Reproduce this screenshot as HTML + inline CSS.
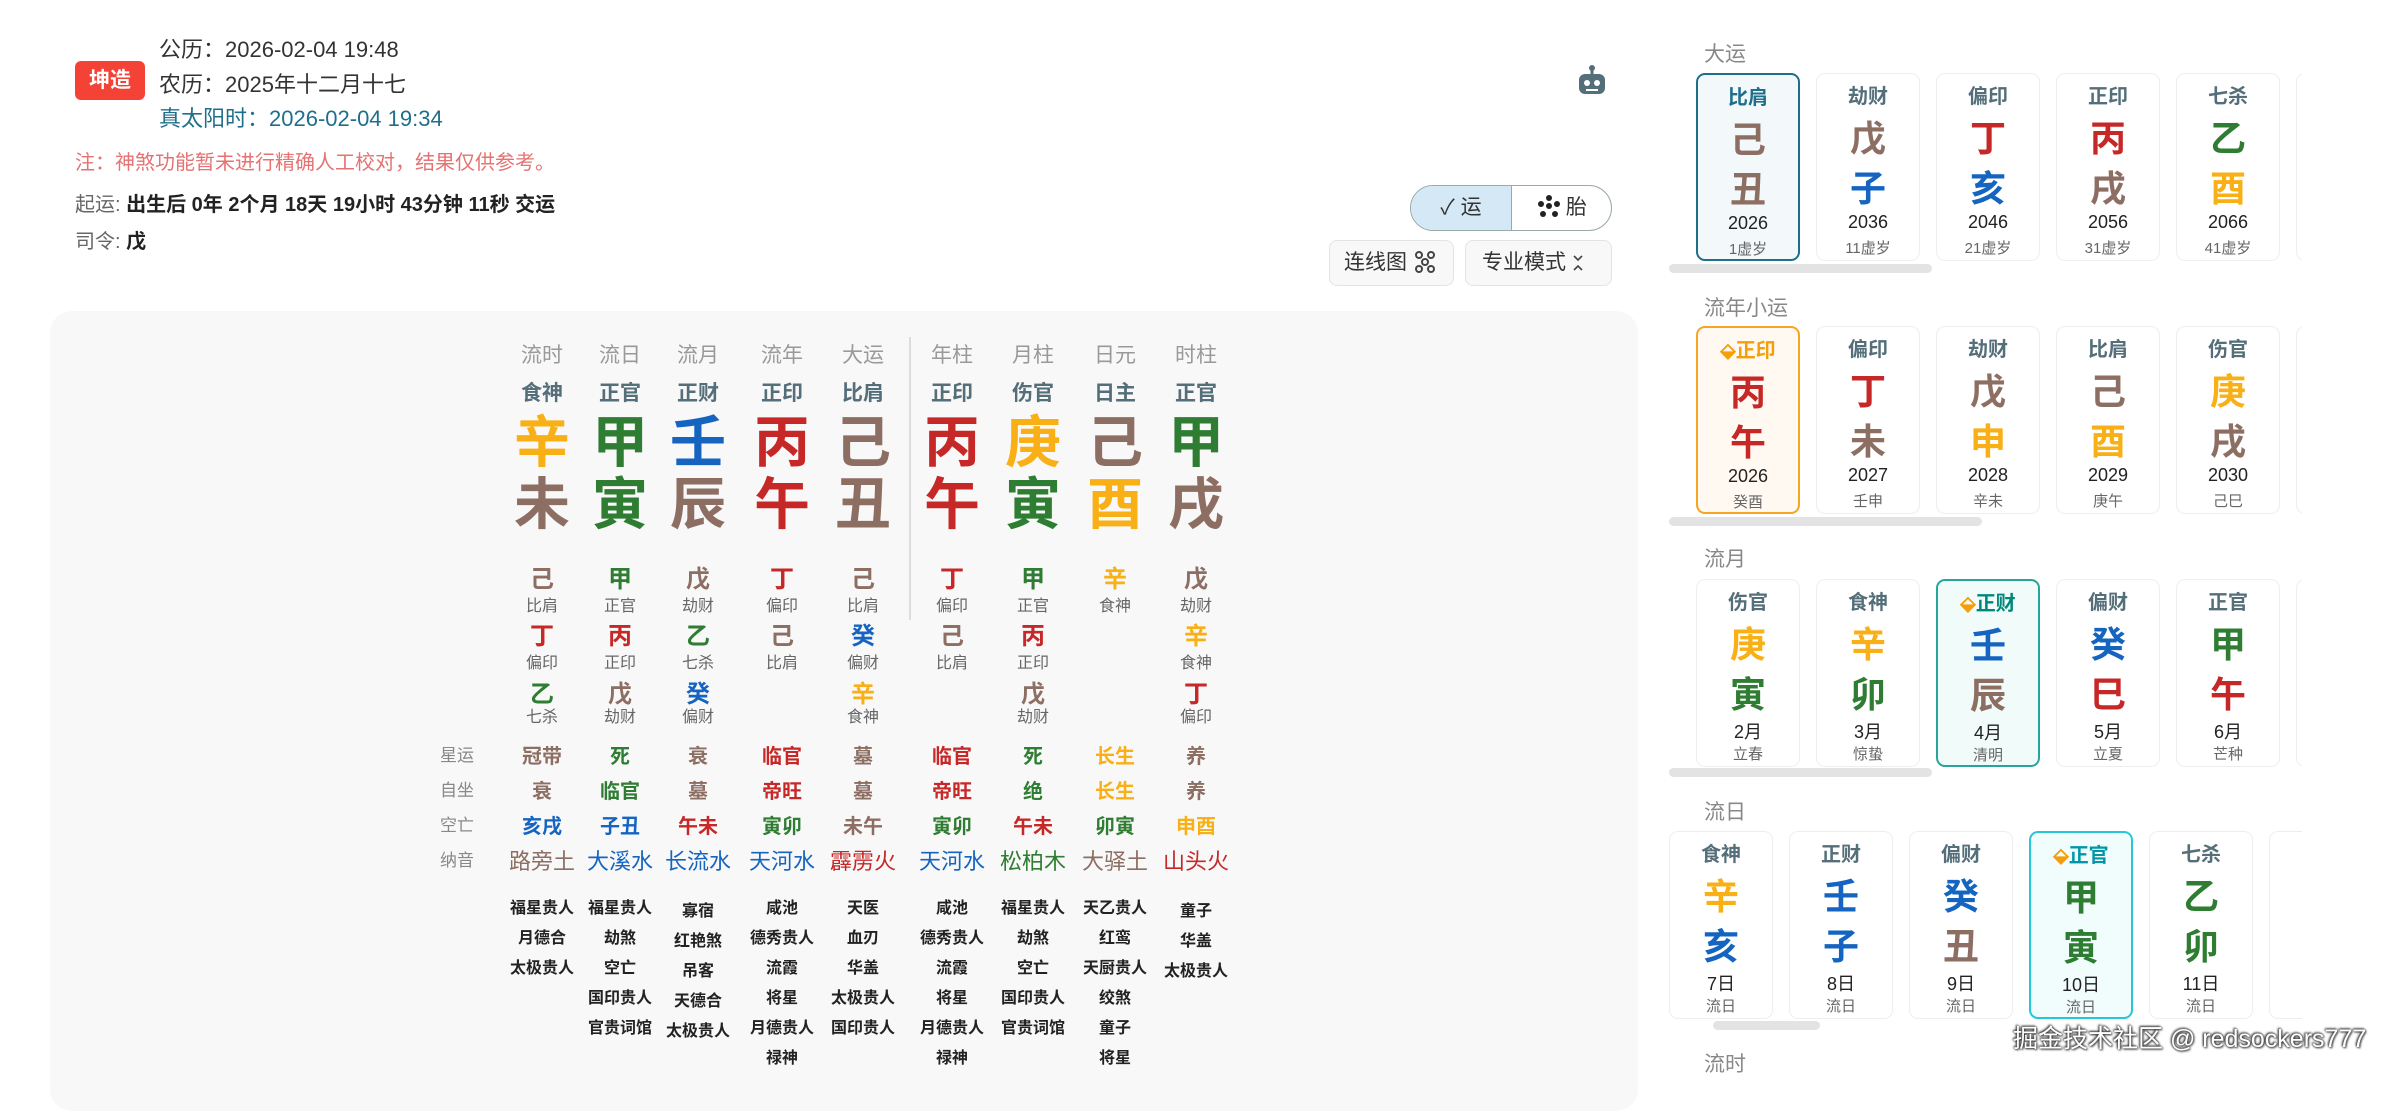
<!DOCTYPE html>
<html><head><meta charset="utf-8">
<style>
*{margin:0;padding:0;box-sizing:border-box}
body{width:2401px;height:1077px;overflow:hidden;background:#fff;font-family:"Liberation Sans","Noto Sans CJK SC",sans-serif;position:relative;color:#333}
.a{position:absolute;white-space:nowrap}
.g{color:#2e7d32}.r{color:#c62828}.b{color:#8d6e63}.y{color:#f9b016}.w{color:#1565c0}
.col{position:absolute;width:90px;text-align:center}
.col div{position:absolute;left:0;width:90px;text-align:center;white-space:nowrap}
.hd{top:0;font-size:21px;color:#999}
.ss{top:38px;font-size:21px;color:#546e7a;font-weight:bold}
.st{top:68px;font-size:56px;font-weight:bold;line-height:72px}
.br{top:130px;font-size:56px;font-weight:bold;line-height:72px}
.hc{font-size:24px;font-weight:bold}
.hl{font-size:16px;color:#666}
.x{font-size:20px;font-weight:bold}
.ny{font-size:22px}
.sh{font-size:16px;font-weight:bold;color:#222}
.lab{font-size:17px;color:#888}
.card{position:absolute;width:104px;height:188px;border:1.5px solid #eee;border-radius:9px;background:#fff;text-align:center}
.card div{position:absolute;left:0;width:100%;text-align:center;white-space:nowrap}
.c1{top:6px;font-size:20px;color:#546e7a;font-weight:bold}
.c2{top:36px;font-size:36px;font-weight:bold}
.c3{top:86px;font-size:36px;font-weight:bold}
.c4{top:138px;font-size:18px;color:#222}
.c5{top:163px;font-size:15px;color:#666}
.sec{position:absolute;left:1704px;font-size:21px;color:#888}
.bar{position:absolute;height:9px;border-radius:5px;background:#e3e3e3}
</style></head><body>

<div class="a" style="left:75px;top:61px;width:70px;height:39px;background:#f44336;color:#fff;border-radius:6px;font-size:21px;font-weight:bold;text-align:center;line-height:39px">坤造</div>
<div class="a" style="left:159px;top:32px;font-size:22px;color:#333">公历：2026-02-04 19:48</div>
<div class="a" style="left:159px;top:67px;font-size:22px;color:#333">农历：2025年十二月十七</div>
<div class="a" style="left:159px;top:101px;font-size:22px;color:#1f6f8b">真太阳时：2026-02-04 19:34</div>
<div class="a" style="left:75px;top:146px;font-size:20px;color:#e57373">注：神煞功能暂未进行精确人工校对，结果仅供参考。</div>
<div class="a" style="left:75px;top:188px;font-size:20px;color:#666">起运: <b style="color:#222">出生后 0年 2个月 18天 19小时 43分钟 11秒 交运</b></div>
<div class="a" style="left:75px;top:225px;font-size:20px;color:#666">司令: <b style="color:#222">戊</b></div>

<svg class="a" style="left:1577px;top:64px" width="30" height="32" viewBox="0 0 30 32"><circle cx="15" cy="4" r="3" fill="#546e7a"/><rect x="13.5" y="5" width="3" height="5" fill="#546e7a"/><rect x="2" y="10" width="26" height="20" rx="6" fill="#546e7a"/><circle cx="10" cy="19" r="3" fill="#fff"/><circle cx="20" cy="19" r="3" fill="#fff"/><rect x="9" y="25" width="12" height="2" fill="#fff"/></svg>

<div class="a" style="left:1410px;top:185px;width:202px;height:46px;border:1.5px solid #9aa;border-radius:23px;overflow:hidden;background:#fff">
 <div class="a" style="left:0;top:0;width:101px;height:46px;background:#d4e8f5;border-right:1.5px solid #9aa;font-size:21px;line-height:44px;text-align:center;color:#333">✓ 运</div>
 <div class="a" style="left:101px;top:0;width:101px;height:46px;font-size:21px;line-height:44px;text-align:center;color:#333"><svg width="22" height="22" viewBox="0 0 22 22" style="vertical-align:-3px"><circle cx="11" cy="11" r="3" fill="#222"/><circle cx="11" cy="3" r="3" fill="#222"/><circle cx="3" cy="9" r="3" fill="#222"/><circle cx="19" cy="9" r="3" fill="#222"/><circle cx="5" cy="19" r="3" fill="#222"/><circle cx="17" cy="19" r="3" fill="#222"/></svg> 胎</div>
</div>
<div class="a" style="left:1329px;top:240px;width:125px;height:46px;border:1.5px solid #e4e4e4;border-radius:8px;background:#f8f8f8;font-size:21px;line-height:44px;padding-left:14px;color:#333">连线图 <svg width="24" height="24" viewBox="0 0 24 24" style="vertical-align:-5px" fill="none" stroke="#444" stroke-width="2"><circle cx="6" cy="5" r="3"/><circle cx="18" cy="5" r="3"/><circle cx="12" cy="12" r="3"/><circle cx="6" cy="19" r="3"/><circle cx="18" cy="19" r="3"/></svg></div>
<div class="a" style="left:1465px;top:240px;width:147px;height:46px;border:1.5px solid #e4e4e4;border-radius:8px;background:#f8f8f8;font-size:21px;line-height:44px;padding-left:16px;color:#333">专业模式 <svg width="12" height="20" viewBox="0 0 12 20" style="vertical-align:-4px" fill="none" stroke="#444" stroke-width="1.6"><path d="M2 3l4 4 4-4M2 17l4-4 4 4"/></svg></div>

<div class="a" style="left:50px;top:311px;width:1588px;height:800px;background:#f8f8f8;border-radius:22px"></div>
<div class="a" style="left:909px;top:337px;width:2px;height:283px;background:#ddd"></div>

<div class="a lab" style="left:440px;top:741px">星运</div>
<div class="a lab" style="left:440px;top:776px">自坐</div>
<div class="a lab" style="left:440px;top:811px">空亡</div>
<div class="a lab" style="left:440px;top:846px">纳音</div>

<div class="col" style="left:497px;top:339px">
<div class="hd">流时</div><div class="ss">食神</div><div class="st y">辛</div><div class="br b">未</div>
<div class="hc b" style="top:220px">己</div><div class="hl" style="top:253px">比肩</div>
<div class="hc r" style="top:277px">丁</div><div class="hl" style="top:310px">偏印</div>
<div class="hc g" style="top:335px">乙</div><div class="hl" style="top:364px">七杀</div>
<div class="x b" style="top:401px">冠带</div><div class="x b" style="top:436px">衰</div><div class="x w" style="top:471px">亥戌</div><div class="ny b" style="top:505px">路旁土</div>
<div class="sh" style="top:555px">福星贵人</div><div class="sh" style="top:585px">月德合</div><div class="sh" style="top:615px">太极贵人</div>
</div>
<div class="col" style="left:575px;top:339px">
<div class="hd">流日</div><div class="ss">正官</div><div class="st g">甲</div><div class="br g">寅</div>
<div class="hc g" style="top:220px">甲</div><div class="hl" style="top:253px">正官</div>
<div class="hc r" style="top:277px">丙</div><div class="hl" style="top:310px">正印</div>
<div class="hc b" style="top:335px">戊</div><div class="hl" style="top:364px">劫财</div>
<div class="x g" style="top:401px">死</div><div class="x g" style="top:436px">临官</div><div class="x w" style="top:471px">子丑</div><div class="ny w" style="top:505px">大溪水</div>
<div class="sh" style="top:555px">福星贵人</div><div class="sh" style="top:585px">劫煞</div><div class="sh" style="top:615px">空亡</div><div class="sh" style="top:645px">国印贵人</div><div class="sh" style="top:675px">官贵词馆</div>
</div>
<div class="col" style="left:653px;top:339px">
<div class="hd">流月</div><div class="ss">正财</div><div class="st w">壬</div><div class="br b">辰</div>
<div class="hc b" style="top:220px">戊</div><div class="hl" style="top:253px">劫财</div>
<div class="hc g" style="top:277px">乙</div><div class="hl" style="top:310px">七杀</div>
<div class="hc w" style="top:335px">癸</div><div class="hl" style="top:364px">偏财</div>
<div class="x b" style="top:401px">衰</div><div class="x b" style="top:436px">墓</div><div class="x r" style="top:471px">午未</div><div class="ny w" style="top:505px">长流水</div>
<div class="sh" style="top:558px">寡宿</div><div class="sh" style="top:588px">红艳煞</div><div class="sh" style="top:618px">吊客</div><div class="sh" style="top:648px">天德合</div><div class="sh" style="top:678px">太极贵人</div>
</div>
<div class="col" style="left:737px;top:339px">
<div class="hd">流年</div><div class="ss">正印</div><div class="st r">丙</div><div class="br r">午</div>
<div class="hc r" style="top:220px">丁</div><div class="hl" style="top:253px">偏印</div>
<div class="hc b" style="top:277px">己</div><div class="hl" style="top:310px">比肩</div>
<div class="x r" style="top:401px">临官</div><div class="x r" style="top:436px">帝旺</div><div class="x g" style="top:471px">寅卯</div><div class="ny w" style="top:505px">天河水</div>
<div class="sh" style="top:555px">咸池</div><div class="sh" style="top:585px">德秀贵人</div><div class="sh" style="top:615px">流霞</div><div class="sh" style="top:645px">将星</div><div class="sh" style="top:675px">月德贵人</div><div class="sh" style="top:705px">禄神</div>
</div>
<div class="col" style="left:818px;top:339px">
<div class="hd">大运</div><div class="ss">比肩</div><div class="st b">己</div><div class="br b">丑</div>
<div class="hc b" style="top:220px">己</div><div class="hl" style="top:253px">比肩</div>
<div class="hc w" style="top:277px">癸</div><div class="hl" style="top:310px">偏财</div>
<div class="hc y" style="top:335px">辛</div><div class="hl" style="top:364px">食神</div>
<div class="x b" style="top:401px">墓</div><div class="x b" style="top:436px">墓</div><div class="x b" style="top:471px">未午</div><div class="ny r" style="top:505px">霹雳火</div>
<div class="sh" style="top:555px">天医</div><div class="sh" style="top:585px">血刃</div><div class="sh" style="top:615px">华盖</div><div class="sh" style="top:645px">太极贵人</div><div class="sh" style="top:675px">国印贵人</div>
</div>
<div class="col" style="left:907px;top:339px">
<div class="hd">年柱</div><div class="ss">正印</div><div class="st r">丙</div><div class="br r">午</div>
<div class="hc r" style="top:220px">丁</div><div class="hl" style="top:253px">偏印</div>
<div class="hc b" style="top:277px">己</div><div class="hl" style="top:310px">比肩</div>
<div class="x r" style="top:401px">临官</div><div class="x r" style="top:436px">帝旺</div><div class="x g" style="top:471px">寅卯</div><div class="ny w" style="top:505px">天河水</div>
<div class="sh" style="top:555px">咸池</div><div class="sh" style="top:585px">德秀贵人</div><div class="sh" style="top:615px">流霞</div><div class="sh" style="top:645px">将星</div><div class="sh" style="top:675px">月德贵人</div><div class="sh" style="top:705px">禄神</div>
</div>
<div class="col" style="left:988px;top:339px">
<div class="hd">月柱</div><div class="ss">伤官</div><div class="st y">庚</div><div class="br g">寅</div>
<div class="hc g" style="top:220px">甲</div><div class="hl" style="top:253px">正官</div>
<div class="hc r" style="top:277px">丙</div><div class="hl" style="top:310px">正印</div>
<div class="hc b" style="top:335px">戊</div><div class="hl" style="top:364px">劫财</div>
<div class="x g" style="top:401px">死</div><div class="x g" style="top:436px">绝</div><div class="x r" style="top:471px">午未</div><div class="ny g" style="top:505px">松柏木</div>
<div class="sh" style="top:555px">福星贵人</div><div class="sh" style="top:585px">劫煞</div><div class="sh" style="top:615px">空亡</div><div class="sh" style="top:645px">国印贵人</div><div class="sh" style="top:675px">官贵词馆</div>
</div>
<div class="col" style="left:1070px;top:339px">
<div class="hd">日元</div><div class="ss">日主</div><div class="st b">己</div><div class="br y">酉</div>
<div class="hc y" style="top:220px">辛</div><div class="hl" style="top:253px">食神</div>
<div class="x y" style="top:401px">长生</div><div class="x y" style="top:436px">长生</div><div class="x g" style="top:471px">卯寅</div><div class="ny b" style="top:505px">大驿土</div>
<div class="sh" style="top:555px">天乙贵人</div><div class="sh" style="top:585px">红鸾</div><div class="sh" style="top:615px">天厨贵人</div><div class="sh" style="top:645px">绞煞</div><div class="sh" style="top:675px">童子</div><div class="sh" style="top:705px">将星</div>
</div>
<div class="col" style="left:1151px;top:339px">
<div class="hd">时柱</div><div class="ss">正官</div><div class="st g">甲</div><div class="br b">戌</div>
<div class="hc b" style="top:220px">戊</div><div class="hl" style="top:253px">劫财</div>
<div class="hc y" style="top:277px">辛</div><div class="hl" style="top:310px">食神</div>
<div class="hc r" style="top:335px">丁</div><div class="hl" style="top:364px">偏印</div>
<div class="x b" style="top:401px">养</div><div class="x b" style="top:436px">养</div><div class="x y" style="top:471px">申酉</div><div class="ny r" style="top:505px">山头火</div>
<div class="sh" style="top:558px">童子</div><div class="sh" style="top:588px">华盖</div><div class="sh" style="top:618px">太极贵人</div>
</div>

<div class="a" style="left:1660px;top:0;width:642px;height:1077px;overflow:hidden">
<div style="position:absolute;left:-1660px;top:0;width:2401px;height:1077px">
<div class="sec" style="top:38px">大运</div>
<div class="card" style="left:1696px;top:73px;border:2px solid #1f6f8b;background:#f3f8fb"><div class="c1" style="color:#1f6f8b">比肩</div><div class="c2 b">己</div><div class="c3 b">丑</div><div class="c4">2026</div><div class="c5">1虚岁</div></div>
<div class="card" style="left:1816px;top:73px"><div class="c1">劫财</div><div class="c2 b">戊</div><div class="c3 w">子</div><div class="c4">2036</div><div class="c5">11虚岁</div></div>
<div class="card" style="left:1936px;top:73px"><div class="c1">偏印</div><div class="c2 r">丁</div><div class="c3 w">亥</div><div class="c4">2046</div><div class="c5">21虚岁</div></div>
<div class="card" style="left:2056px;top:73px"><div class="c1">正印</div><div class="c2 r">丙</div><div class="c3 b">戌</div><div class="c4">2056</div><div class="c5">31虚岁</div></div>
<div class="card" style="left:2176px;top:73px"><div class="c1">七杀</div><div class="c2 g">乙</div><div class="c3 y">酉</div><div class="c4">2066</div><div class="c5">41虚岁</div></div>
<div class="card" style="left:2296px;top:73px"></div>
<div class="bar" style="left:1669px;top:264px;width:263px"></div>

<div class="sec" style="top:292px">流年小运</div>
<div class="card" style="left:1696px;top:326px;border:2px solid #f5a623;background:#fff9f1"><div class="c1" style="color:#f59e0b">⬙正印</div><div class="c2 r">丙</div><div class="c3 r">午</div><div class="c4">2026</div><div class="c5">癸酉</div></div>
<div class="card" style="left:1816px;top:326px"><div class="c1">偏印</div><div class="c2 r">丁</div><div class="c3 b">未</div><div class="c4">2027</div><div class="c5">壬申</div></div>
<div class="card" style="left:1936px;top:326px"><div class="c1">劫财</div><div class="c2 b">戊</div><div class="c3 y">申</div><div class="c4">2028</div><div class="c5">辛未</div></div>
<div class="card" style="left:2056px;top:326px"><div class="c1">比肩</div><div class="c2 b">己</div><div class="c3 y">酉</div><div class="c4">2029</div><div class="c5">庚午</div></div>
<div class="card" style="left:2176px;top:326px"><div class="c1">伤官</div><div class="c2 y">庚</div><div class="c3 b">戌</div><div class="c4">2030</div><div class="c5">己巳</div></div>
<div class="card" style="left:2296px;top:326px"></div>
<div class="bar" style="left:1669px;top:517px;width:313px"></div>

<div class="sec" style="top:543px">流月</div>
<div class="card" style="left:1696px;top:579px"><div class="c1">伤官</div><div class="c2 y">庚</div><div class="c3 g">寅</div><div class="c4">2月</div><div class="c5">立春</div></div>
<div class="card" style="left:1816px;top:579px"><div class="c1">食神</div><div class="c2 y">辛</div><div class="c3 g">卯</div><div class="c4">3月</div><div class="c5">惊蛰</div></div>
<div class="card" style="left:1936px;top:579px;border:2px solid #26a69a;background:#f1fbfa"><div class="c1" style="color:#00897b"><span style="color:#f59e0b">⬙</span>正财</div><div class="c2 w">壬</div><div class="c3 b">辰</div><div class="c4">4月</div><div class="c5">清明</div></div>
<div class="card" style="left:2056px;top:579px"><div class="c1">偏财</div><div class="c2 w">癸</div><div class="c3 r">巳</div><div class="c4">5月</div><div class="c5">立夏</div></div>
<div class="card" style="left:2176px;top:579px"><div class="c1">正官</div><div class="c2 g">甲</div><div class="c3 r">午</div><div class="c4">6月</div><div class="c5">芒种</div></div>
<div class="card" style="left:2296px;top:579px"></div>
<div class="bar" style="left:1669px;top:768px;width:263px"></div>

<div class="sec" style="top:796px">流日</div>
<div class="card" style="left:1669px;top:831px"><div class="c1">食神</div><div class="c2 y">辛</div><div class="c3 w">亥</div><div class="c4">7日</div><div class="c5">流日</div></div>
<div class="card" style="left:1789px;top:831px"><div class="c1">正财</div><div class="c2 w">壬</div><div class="c3 w">子</div><div class="c4">8日</div><div class="c5">流日</div></div>
<div class="card" style="left:1909px;top:831px"><div class="c1">偏财</div><div class="c2 w">癸</div><div class="c3 b">丑</div><div class="c4">9日</div><div class="c5">流日</div></div>
<div class="card" style="left:2029px;top:831px;border:2px solid #26c6da;background:#f1fcfd"><div class="c1" style="color:#0097a7"><span style="color:#f59e0b">⬙</span>正官</div><div class="c2 g">甲</div><div class="c3 g">寅</div><div class="c4">10日</div><div class="c5">流日</div></div>
<div class="card" style="left:2149px;top:831px"><div class="c1">七杀</div><div class="c2 g">乙</div><div class="c3 g">卯</div><div class="c4">11日</div><div class="c5">流日</div></div>
<div class="card" style="left:2269px;top:831px"></div>
<div class="bar" style="left:1713px;top:1021px;width:107px"></div>
<div class="sec" style="top:1048px">流时</div>
</div></div>

<div class="a" style="left:2013px;top:1019px;font-size:25px;color:#fff;text-shadow:0 0 2px #333,1px 1px 2px #333,-1px -1px 2px #333">掘金技术社区 @ redsockers777</div>
</body></html>
